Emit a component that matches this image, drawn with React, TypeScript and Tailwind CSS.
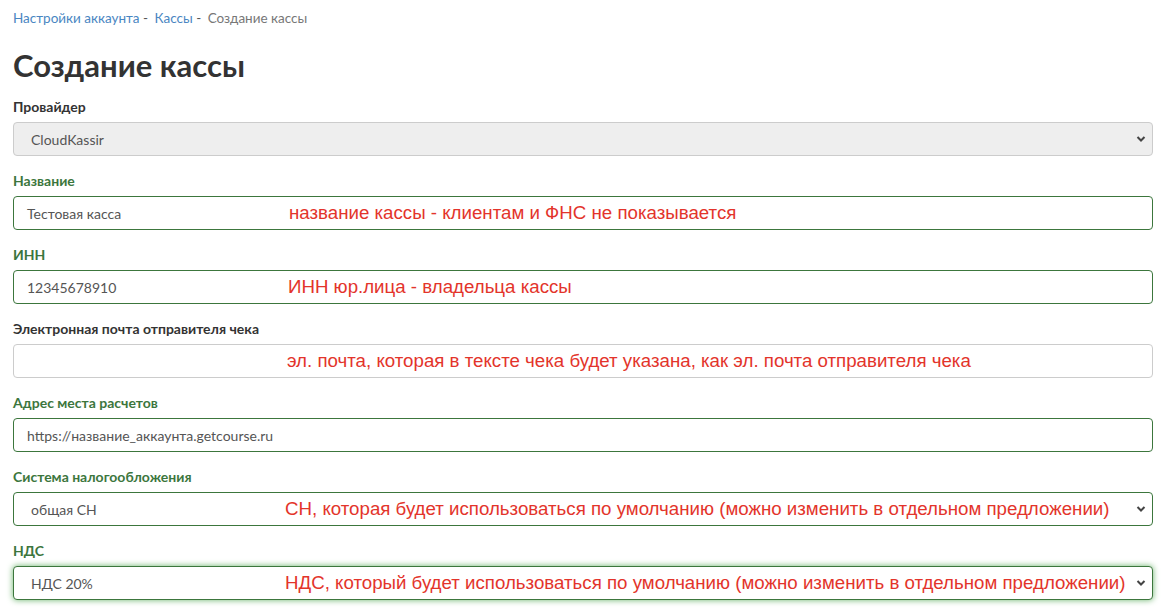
import React from 'react'

const note = "absolute text-[18.7px] text-[#e3342b] leading-none whitespace-nowrap font-['Liberation_Sans',Arial,sans-serif]"

function Chevron() {
  return (
    <svg width="10" height="7" viewBox="0 0 10 7" className="absolute right-[6px] top-1/2 -translate-y-1/2">
      <path d="M1.5 1.5 L5 5 L8.5 1.5" fill="none" stroke="#444" strokeWidth="2" />
    </svg>
  )
}

type FieldProps = {
  label: string
  value: string
  ok?: boolean
  select?: boolean
  disabled?: boolean
  focus?: boolean
  hint?: string
  hintLeft?: string
}

function Field({ label, value, ok, select, disabled, focus, hint, hintLeft }: FieldProps) {
  const border = ok ? 'border-[#3c763d]' : 'border-[#ccc]'
  return (
    <div className="mb-[15px]">
      <div className={`text-[14px] font-bold leading-[20px] mb-[5px] ${ok ? 'text-[#3c763d]' : 'text-[#333]'}`}>{label}</div>
      <div
        className={`relative h-[34px] rounded-[4px] border ${border} ${disabled ? 'bg-[#eee]' : 'bg-white'} ${focus ? 'shadow-[0_0_6px_#67b168]' : ''} flex items-center ${select ? 'pl-[17px]' : 'pl-[13px]'} text-[14px] text-[#555]`}
      >
        {value}
        {hint && <span className={`${note} ${hintLeft}`}>{hint}</span>}
        {select && <Chevron />}
      </div>
    </div>
  )
}

export default function App() {
  return (
    <div className="min-h-[616px] bg-white pl-[13px] pr-[17px] pt-[9px]" style={{ fontFamily: 'Lato, "Open Sans", sans-serif' }}>
      <div className="text-[13.5px] leading-[18px] text-[#555]">
        <span className="text-[#4a86c2]">Настройки аккаунта</span> -{' '}
        <span className="text-[#4a86c2] ml-[3px]">Кассы</span> -{' '}
        <span className="text-[#777] ml-[3px]">Создание кассы</span>
      </div>
      <h1 className="mt-[21px] mb-[15px] text-[31px] leading-[34px] font-bold text-[#333]">Создание кассы</h1>
      <Field label="Провайдер" value="CloudKassir" select disabled />
      <Field label="Название" value="Тестовая касса" ok hint="название кассы - клиентам и ФНС не показывается" hintLeft="left-[275px]" />
      <Field label="ИНН" value="12345678910" ok hint="ИНН юр.лица - владельца кассы" hintLeft="left-[274px]" />
      <Field label="Электронная почта отправителя чека" value="" hint="эл. почта, которая в тексте чека будет указана, как эл. почта отправителя чека" hintLeft="left-[273px]" />
      <Field label="Адрес места расчетов" value="https://название_аккаунта.getcourse.ru" ok />
      <Field label="Система налогообложения" value="общая СН" ok select hint="СН, которая будет использоваться по умолчанию (можно изменить в отдельном предложении)" hintLeft="left-[271px]" />
      <Field label="НДС" value="НДС 20%" ok select focus hint="НДС, который будет использоваться по умолчанию (можно изменить в отдельном предложении)" hintLeft="left-[271px]" />
    </div>
  )
}
